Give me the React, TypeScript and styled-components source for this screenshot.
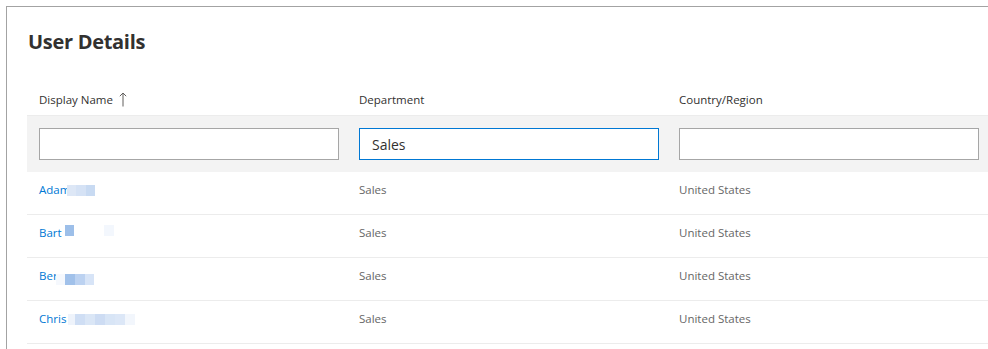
import styled, { createGlobalStyle } from "styled-components";

interface IUser {
  first: string,
  smudge: { w: number, c: string, dy?: number }[],
  smudgeX: number,
  department: string,
  country: string,
}

const users: IUser[] = [
  {
    first: "Adam", smudgeX: -3, department: "Sales", country: "United States",
    smudge: [{ w: 9, c: "#dde7f6" }, { w: 10, c: "#d5e2f5" }, { w: 9, c: "#c8daf2" }],
  },
  {
    first: "Bart", smudgeX: 3, department: "Sales", country: "United States",
    smudge: [{ w: 9, c: "#9dbfe9", dy: -3 }, { w: 30, c: "#ffffff" }, { w: 10, c: "#f3f7fd", dy: -3 }],
  },
  {
    first: "Ber", smudgeX: -2, department: "Sales", country: "United States",
    smudge: [{ w: 9, c: "#f5f8fd", dy: 3 }, { w: 10, c: "#a1c1ea", dy: 3 }, { w: 10, c: "#bcd2f1", dy: 3 }, { w: 9, c: "#d7e4f7", dy: 3 }],
  },
  {
    first: "Chris", smudgeX: 2, department: "Sales", country: "United States",
    smudge: [{ w: 7, c: "#eef3fb" }, { w: 10, c: "#cfdef4" }, { w: 10, c: "#dae6f6" }, { w: 10, c: "#cddcf3" }, { w: 10, c: "#d8e5f6" }, { w: 10, c: "#dce7f7" }, { w: 10, c: "#f2f6fc" }],
  },
];

const GlobalStyle = createGlobalStyle`
  body {
    margin: 0;
    background: #ffffff;
    overflow: hidden;
    font-family: "Open Sans", "Noto Sans", sans-serif;
  }
  #root {
    width: 988px;
    height: 349px;
    overflow: hidden;
  }
`;

const Frame = styled.div`
  margin: 6px 0 0 6px;
  width: 1100px;
  height: 400px;
  border-left: 1px solid #a3a3a3;
  border-top: 1px solid #a3a3a3;
  padding: 0 0 0 20px;
  box-sizing: border-box;
`;

const Title = styled.h1`
  margin: 0;
  padding: 21px 0 0 1px;
  height: 77px;
  box-sizing: border-box;
  font-size: 20px;
  line-height: 28px;
  font-weight: 700;
  letter-spacing: -0.3px;
  color: #323130;
`;

const Row = styled.div<{ $filter?: boolean, $header?: boolean }>`
  display: grid;
  grid-template-columns: repeat(3, 320px) 1fr;
  box-sizing: border-box;
  height: ${(p) => (p.$header ? "32px" : p.$filter ? "56px" : "43px")};
  align-items: ${(p) => (p.$header || p.$filter ? "center" : "start")};
  background: ${(p) => (p.$filter ? "#f3f3f3" : "#ffffff")};
  border-bottom: ${(p) => (p.$filter ? "none" : "1px solid #ececec")};
`;

const HeaderCell = styled.div`
  padding-left: 12px;
  font-size: 11.5px;
  color: #323130;
  display: flex;
  align-items: center;
  gap: 6px;
`;

const FilterCell = styled.div`
  padding: 0 8px 0 12px;
`;

const FilterInput = styled.input<{ $focused?: boolean }>`
  display: block;
  width: 100%;
  height: 32px;
  box-sizing: border-box;
  margin: 0;
  padding: 0 12px;
  border: 1px solid ${(p) => (p.$focused ? "#0078d4" : "#a6a6a6")};
  border-radius: 0;
  outline: none;
  background: #ffffff;
  font-family: "Open Sans", "Noto Sans", sans-serif;
  font-size: 14px;
  color: #323130;
`;

const Cell = styled.div`
  padding: 10px 0 0 12px;
  font-size: 11.5px;
  line-height: 16px;
  color: #666666;
  white-space: nowrap;
`;

const NameLink = styled.a`
  color: #0078d4;
  text-decoration: none;
  display: inline-flex;
  align-items: center;
`;

const Smudge = styled.span<{ $x: number }>`
  display: inline-flex;
  margin-left: ${(p) => p.$x}px;
`;

const Pixel = styled.span<{ $w: number, $c: string, $dy?: number }>`
  display: inline-block;
  width: ${(p) => p.$w}px;
  height: 11px;
  background: ${(p) => p.$c};
  transform: translateY(${(p) => p.$dy ?? 0}px);
`;

const SortArrow = () => (
  <svg width="8" height="15" viewBox="0 0 8 15">
    <path d="M4 1 L4 14.5 M0.8 4.2 L4 1 L7.2 4.2" stroke="#605e5c" strokeWidth="1" fill="none" />
  </svg>
);

export default function App() {
  return (
    <>
      <GlobalStyle />
      <Frame>
        <Title>User Details</Title>
        <Row $header>
          <HeaderCell>Display Name <SortArrow /></HeaderCell>
          <HeaderCell>Department</HeaderCell>
          <HeaderCell>Country/Region</HeaderCell>
        </Row>
        <Row $filter>
          <FilterCell><FilterInput defaultValue="" /></FilterCell>
          <FilterCell><FilterInput $focused defaultValue="Sales" /></FilterCell>
          <FilterCell><FilterInput defaultValue="" /></FilterCell>
        </Row>
        {users.map((u) => (
          <Row key={u.first}>
            <Cell>
              <NameLink href="#">
                {u.first}
                <Smudge $x={u.smudgeX}>
                  {u.smudge.map((s, i) => (
                    <Pixel key={i} $w={s.w} $c={s.c} $dy={s.dy} />
                  ))}
                </Smudge>
              </NameLink>
            </Cell>
            <Cell>{u.department}</Cell>
            <Cell>{u.country}</Cell>
          </Row>
        ))}
      </Frame>
    </>
  );
}
